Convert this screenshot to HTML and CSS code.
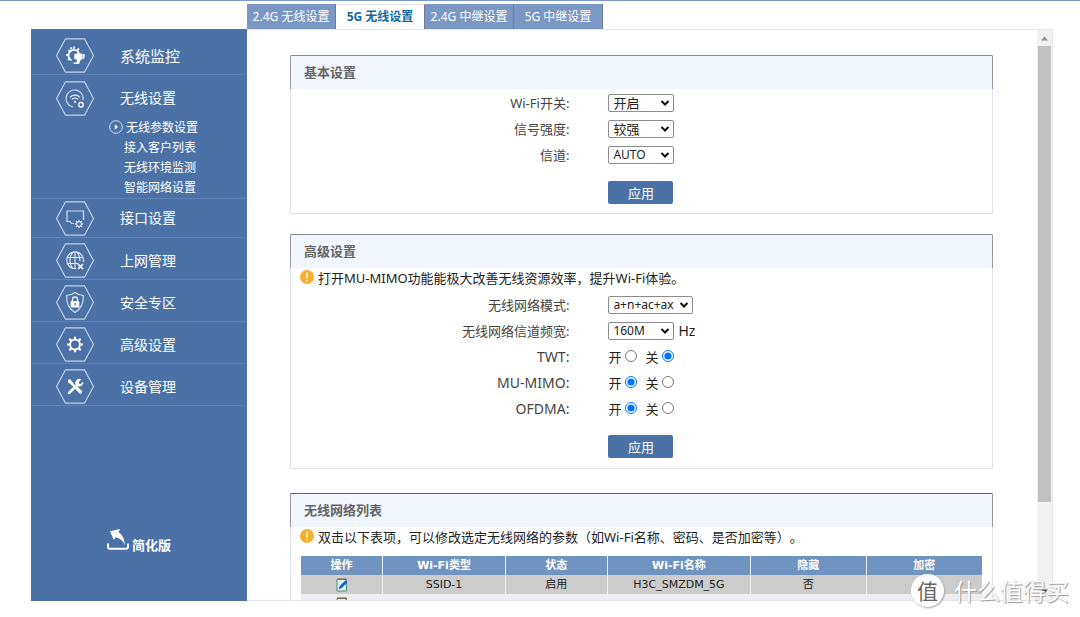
FILE: index.html
```html
<!DOCTYPE html>
<html lang="zh-CN">
<head>
<meta charset="utf-8">
<meta name="viewport" content="width=device-width, initial-scale=1">
<title>5G 无线设置</title>
<link rel="stylesheet" href="styles.css">
</head>
<body>
<svg class="sprite" aria-hidden="true">
  <defs>
    <symbol id="hex" viewBox="0 0 38 35"><path d="M9.5 .8h19l9 16.7-9 16.7h-19L.5 17.500z" fill="none" stroke="#c3d2e8" stroke-width="1.200"/></symbol>
    <symbol id="cog" viewBox="0 0 16 16">
      <circle cx="8" cy="8" r="4.900" fill="none" stroke="#fff" stroke-width="1.900"/>
      <path d="M8 0v3M8 13v3M0 8h3M13 8h3M2.300 2.300l2 2M11.700 11.700l2 2M13.700 2.300l-2 2M4.300 11.700l-2 2" stroke="#fff" stroke-width="2.200" fill="none"/>
    </symbol>
    <symbol id="info" viewBox="0 0 14 14">
      <circle cx="7" cy="7" r="7" fill="#f7ae2c"/>
      <path d="M7 3v5" stroke="#fff3dc" stroke-width="1.600" stroke-linecap="round"/><circle cx="7" cy="10.800" r="1" fill="#fff3dc"/>
    </symbol>
    <symbol id="edit" viewBox="0 0 12 14">
      <path d="M1 1.500h9.500v11.500H1z" fill="#d6f3ee" stroke="#4f8f86" stroke-width="1"/>
      <path d="M1 1.200h9.500" stroke="#8a6a4a" stroke-width="1.600"/>
      <path d="M3 10.800l1-3L9.500 2.300l2 2L6 9.800z" fill="#1a5fd6"/>
      <path d="M3 10.800l.6-1.900 1.300 1.300z" fill="#123"/>
    </symbol>
  </defs>
</svg>

<div class="page">
  <aside class="sidebar">
    <nav class="menu">
      <a class="menu-item menu-item--first" href="#">
        <svg class="menu-icon" viewBox="0 0 38 35"><use href="#hex"/>
          <path d="M15.500 22.500a5.600 5.600 0 1 1 7.500-7.500" fill="none" stroke="#fff" stroke-width="1.800"/>
          <path d="M12.500 12l1.500 1.500M10.200 17h2M12 22l1.600-1.200M18 8.500v2.200M23 10.500l-1.500 1.500M14.800 9.400l.8 1.800" stroke="#fff" stroke-width="1.800"/>
          <path d="M18.500 16l4-1 6.500 1.500-.8 4-3.700 1.500-1.500 4h-5l-1-1.600h3.500l.5-2.400-3-1.500z" fill="#fff"/>
          <path d="M26.500 16.500l-.5 4.500" stroke="#4b72a6" stroke-width=".6"/>
        </svg><span>系统监控</span></a>
      <div class="menu-group">
        <a class="menu-item" href="#">
          <svg class="menu-icon" viewBox="0 0 38 35"><use href="#hex"/>
            <path d="M17 26a8.600 8.600 0 1 1 10-6.500" fill="none" stroke="#d3deee" stroke-width="1.100"/>
            <path d="M14 16.300a7 7 0 0 1 10 0M15.800 18.400a4.500 4.500 0 0 1 6.400 0" fill="none" stroke="#e2eaf5" stroke-width="1.200"/>
            <circle cx="19" cy="20.800" r="1.100" fill="#fff"/>
            <circle cx="25" cy="23.700" r="2.300" fill="none" stroke="#fff" stroke-width="1.400"/>
          </svg><span>无线设置</span></a>
        <ul class="submenu">
          <li class="is-current"><a href="#"><svg class="play" viewBox="0 0 14 14"><circle cx="7" cy="7" r="6.300" fill="none" stroke="#d3deee"/><path d="M5.800 4.200L9 7 5.800 9.800z" fill="#fff"/></svg>无线参数设置</a></li>
          <li><a href="#">接入客户列表</a></li>
          <li><a href="#">无线环境监测</a></li>
          <li><a href="#">智能网络设置</a></li>
        </ul>
      </div>
      <a class="menu-item menu-item--compact" href="#">
        <svg class="menu-icon" viewBox="0 0 38 35"><use href="#hex"/>
          <path d="M18 22.500h-2.500l-1.500-2h-3V10h16.500v9" fill="none" stroke="#d3deee" stroke-width="1.200"/>
          <use href="#cog" x="19" y="19" width="8" height="8"/>
        </svg><span>接口设置</span></a>
      <a class="menu-item" href="#">
        <svg class="menu-icon" viewBox="0 0 38 35"><use href="#hex"/>
          <g fill="none" stroke="#e2eaf5" stroke-width="1.100"><path d="M20 25.600a8.400 8.400 0 1 1 7.300-6.600M10.800 14.500h16.600M10.800 20.500h11.500M19 9v16.500M17 9.300c-4 4.500-4 12 0 16.300M21 9.300c2 2.200 3 5.200 3 8.700"/></g>
          <path d="M22 21l5 5M27 21l-5 5" stroke="#fff" stroke-width="1.700"/>
        </svg><span>上网管理</span></a>
      <a class="menu-item" href="#">
        <svg class="menu-icon" viewBox="0 0 38 35"><use href="#hex"/>
          <path d="M19 7.500c2.500 2 5 2.800 8.300 3 .5 8-1.500 13-8.300 17-6.800-4-8.800-9-8.300-17 3.300-.2 5.800-1 8.300-3z" fill="none" stroke="#d3deee" stroke-width="1.200"/>
          <path d="M14.700 16.200h8.600v6.300h-8.600z" fill="#fff"/><path d="M16.500 16.500v-2.200a2.500 2.500 0 0 1 5 0v2.200" fill="none" stroke="#fff" stroke-width="1.300"/>
          <path d="M19 18v2.500" stroke="#4b72a6" stroke-width="1.200"/>
        </svg><span>安全专区</span></a>
      <a class="menu-item" href="#">
        <svg class="menu-icon" viewBox="0 0 38 35"><use href="#hex"/><use href="#cog" x="11" y="9.500" width="16" height="16"/></svg><span>高级设置</span></a>
      <a class="menu-item" href="#">
        <svg class="menu-icon" viewBox="0 0 38 35"><use href="#hex"/>
          <path d="M12.500 10.500l1.500-.5 5.500 7-1.300 1.300-6.500-5.300z" fill="#fff"/>
          <path d="M20 18.500l4.500 4.500" stroke="#fff" stroke-width="3.400" stroke-linecap="round"/>
          <path d="M13 24l9-9" stroke="#fff" stroke-width="2.500" stroke-linecap="round"/>
          <path d="M25.300 10.500l-2.500 2.500.3 1.700 1.700.3 2.300-2.500a4 4 0 0 1-5.700 4.500l-2-2a4 4 0 0 1 5.900-4.500z" fill="#fff"/>
        </svg><span>设备管理</span></a>
    </nav>
    <a class="simple-link" href="#">
      <svg viewBox="0 0 22 22"><path d="M1 14.500v3.200q0 2 2 2h16q2 0 2-2v-3.200" fill="none" stroke="#fff" stroke-width="1.900"/><path d="M3 2.200L13 0l-1.400 3.300c4 2.500 5.800 6.500 6.200 13-2-5-5-7-9-8L6.800 11z" fill="#fff"/></svg>
      <span>简化版</span></a>
  </aside>

  <main class="main">
    <nav class="tabs">
      <a class="tab" href="#">2.4G 无线设置</a>
      <a class="tab is-active" href="#" aria-current="page">5G 无线设置</a>
      <a class="tab" href="#">2.4G 中继设置</a>
      <a class="tab" href="#">5G 中继设置</a>
    </nav>
    <div class="frame">
      <div class="content">
        <section class="panel">
          <h2>基本设置</h2>
          <form class="form">
            <div class="row"><label for="wifi">Wi-Fi开关:</label><div><select id="wifi"><option>开启</option></select></div></div>
            <div class="row"><label for="power">信号强度:</label><div><select id="power"><option>较强</option></select></div></div>
            <div class="row"><label for="channel">信道:</label><div><select id="channel"><option>AUTO</option></select></div></div>
            <div class="row row--action"><button type="button">应用</button></div>
          </form>
        </section>

        <section class="panel panel--advanced">
          <h2>高级设置</h2>
          <p class="note"><svg viewBox="0 0 14 14"><use href="#info"/></svg>打开MU-MIMO功能能极大改善无线资源效率，提升Wi-Fi体验。</p>
          <form class="form">
            <div class="row"><label for="mode">无线网络模式:</label><div><select id="mode" class="wide"><option>a+n+ac+ax</option></select></div></div>
            <div class="row"><label for="width">无线网络信道频宽:</label><div><select id="width"><option>160M</option></select><span class="unit">Hz</span></div></div>
            <div class="row"><span class="name">TWT:</span><div class="radios"><label>开<input type="radio" name="twt"></label><label>关<input type="radio" name="twt" checked></label></div></div>
            <div class="row"><span class="name">MU-MIMO:</span><div class="radios"><label>开<input type="radio" name="mimo" checked></label><label>关<input type="radio" name="mimo"></label></div></div>
            <div class="row"><span class="name">OFDMA:</span><div class="radios"><label>开<input type="radio" name="ofdma" checked></label><label>关<input type="radio" name="ofdma"></label></div></div>
            <div class="row row--action"><button type="button">应用</button></div>
          </form>
        </section>

        <section class="panel panel--list">
          <h2>无线网络列表</h2>
          <p class="note"><svg viewBox="0 0 14 14"><use href="#info"/></svg>双击以下表项，可以修改选定无线网络的参数（如Wi-Fi名称、密码、是否加密等）。</p>
          <table>
            <colgroup><col class="c-op"><col class="c-type"><col class="c-state"><col class="c-name"><col class="c-flag"><col class="c-flag"></colgroup>
            <thead><tr><th>操作</th><th>Wi-Fi类型</th><th>状态</th><th>Wi-Fi名称</th><th>隐藏</th><th>加密</th></tr></thead>
            <tbody>
              <tr><td><svg viewBox="0 0 12 14"><use href="#edit"/></svg></td><td>SSID-1</td><td>启用</td><td>H3C_SMZDM_5G</td><td>否</td><td></td></tr>
              <tr><td><svg viewBox="0 0 12 14"><use href="#edit"/></svg></td><td></td><td></td><td></td><td></td><td></td></tr>
            </tbody>
          </table>
        </section>
      </div>
      <div class="scrollbar" aria-hidden="true">
        <svg viewBox="0 0 14 16"><path d="M3.500 10.500L7 6.500l3.500 4z" fill="#8f8f8f"/></svg>
        <div class="thumb"></div>
        <svg viewBox="0 0 14 16"><path d="M3.500 5.500L7 9.500l3.500-4z" fill="#505050"/></svg>
      </div>
    </div>
  </main>
</div>
<div class="watermark"><span class="badge">值</span><span>什么值得买</span></div>
</body>
</html>
```
FILE: styles.css
```css
* { box-sizing: border-box; }

body {
  margin: 0;
  background: #fff;
  color: #222;
  font: 13px/20px "Noto Sans", "Noto Sans CJK SC", sans-serif;
  text-spacing-trim: space-all;
}

a { color: inherit; text-decoration: none; }

.sprite { position: absolute; width: 0; height: 0; }

.page {
  display: flex;
  height: 100vh;
  padding: 0 27px 16px 31px;
  border-top: 1px solid #7b98c4;
}

/* Sidebar */
.sidebar {
  display: flex;
  flex: none;
  flex-direction: column;
  width: 216px;
  margin-top: 28px;
  padding-top: 4px;
  background: #4b72a6;
  color: #fff;
}

.menu-item {
  display: flex;
  align-items: center;
  gap: 26px;
  height: 42px;
  padding: 4px 0 0 25px;
  border-bottom: 1px solid #5f83b4;
  font-size: 14px;
}

.menu-item--first { font-size: 15px; }
.menu-item--compact { height: 39px; padding-top: 0; }
.menu-icon { width: 38px; height: 35px; }

.menu-group { border-bottom: 1px solid #5f83b4; }
.menu-group .menu-item { border-bottom: 0; }

.submenu {
  margin: 0;
  padding: 1px 0 0 93px;
  list-style: none;
  font-size: 12px;
}

.submenu .is-current { margin-left: -15px; }
.submenu a { display: flex; align-items: center; gap: 3px; }
.play { width: 14px; height: 14px; margin-bottom: 3px; }

.simple-link {
  display: flex;
  align-items: flex-end;
  gap: 3px;
  margin: auto 0 46px 76px;
  font-weight: bold;
}

.simple-link svg { width: 22px; height: 22px; margin-bottom: 4px; }

/* Tabs */
.main {
  display: flex;
  flex: 1;
  flex-direction: column;
  min-width: 0;
}

.tabs {
  display: flex;
  height: 28px;
  padding-top: 3px;
  font-size: 12px;
}

.tab {
  width: 89px;
  border-right: 1px solid #6d7c97;
  background: #7b98c4;
  color: #fff;
  line-height: 25px;
  text-align: center;
}

.tab.is-active {
  border-top: 1px solid #dfe3ee;
  background: #fff;
  color: #17699c;
  font-weight: bold;
  line-height: 23px;
}

/* Scrolling frame */
.frame {
  display: flex;
  flex: 1;
  min-height: 0;
  border: 1px solid #e4e4ee;
  border-left: 0;
}

.content {
  flex: 1;
  overflow: hidden;
  padding: 25px 44px 0 43px;
}

.scrollbar {
  display: flex;
  flex-direction: column;
  justify-content: space-between;
  width: 15px;
  background: #f1f1f1;
}

.scrollbar svg { flex: none; height: 16px; }

.thumb {
  flex: 0 0 80%;
  margin: 0 1px auto;
  background: #c1c1c1;
}

/* Panels */
.panel {
  min-height: 159px;
  margin-bottom: 20px;
  border: 1px solid #dfe2f0;
  border-top-color: #8a8c92;
}

.panel--advanced { min-height: 235px; margin-bottom: 24px; }

.panel h2 {
  margin: 0 -1px;
  padding-left: 13px;
  border: solid #98999f;
  border-width: 0 1px;
  background: #f2f6ff;
  color: #666;
  font-size: 13px;
  line-height: 33px;
}

.panel--list { border-top-color: #666; }

.note {
  display: flex;
  align-items: center;
  gap: 4px;
  height: 20px;
  margin: 0 0 4px;
  padding-left: 9px;
}

.note svg { flex: none; width: 14px; height: 14px; margin-bottom: 3px; }

.form { padding-top: 1px; }
.panel--advanced .form { padding-top: 0; }

.row {
  display: grid;
  grid-template-columns: 40% 1fr;
  column-gap: 37px;
  align-items: center;
  height: 26px;
}

.row > label, .row > .name {
  padding-right: 2px;
  color: #444;
  text-align: right;
}

.row > .name { font-size: 14px; }
.row > div { display: flex; align-items: center; }

select {
  width: 66px;
  height: 18px;
  padding: 0 16px 0 4px;
  border: 1px solid #8c8c8c;
  border-radius: 2px;
  appearance: none;
  background: #fff url("data:image/svg+xml,%3Csvg xmlns='http://www.w3.org/2000/svg' viewBox='0 0 10 8'%3E%3Cpath d='M1.500 2l3.500 3.500L8.500 2' fill='none' stroke='%23111' stroke-width='2'/%3E%3C/svg%3E") no-repeat right 3px center / 10px 8px;
  color: #222;
  font: 12px/16px "Noto Sans", "Noto Sans CJK SC", sans-serif;
}

#wifi, #power { font-size: 13px; }
select.wide { width: 85px; }
.unit { margin-left: 4px; font-size: 14px; }

.radios { gap: 8px; }
.radios label { display: flex; align-items: center; gap: 4px; }
.radios input { width: 12px; height: 12px; margin: 0 0 3px; }

.row--action { height: 22px; margin-top: 13px; }

button {
  grid-column: 2;
  width: 65px;
  height: 23px;
  padding: 0;
  border: 0;
  border-radius: 2px;
  background: #4b72a6;
  color: #fff;
  font: 13px "Noto Sans CJK SC", sans-serif;
}

/* Network table */
table {
  width: calc(100% - 20px);
  margin: 9px 10px 0;
  border-collapse: collapse;
  table-layout: fixed;
  font: 11px/19px "DejaVu Sans", "Noto Sans CJK SC", sans-serif;
  text-align: center;
}

.c-op { width: 12%; }
.c-type { width: 18%; }
.c-state { width: 15%; }
.c-name { width: 21%; }
.c-flag { width: 17%; }

th, td { height: 19px; padding: 0; }
th + th, td + td { border-left: 1px solid #f0f0f0; }
th { background: #7094c1; color: #fff; }
td { background: #ccc; }
tr + tr td { background: #eee; }
td svg { display: block; width: 12px; height: 14px; margin: 0 auto; }

/* Watermark */
.watermark {
  position: absolute;
  right: 11px;
  bottom: 10px;
  display: flex;
  align-items: center;
  gap: 10px;
  color: #fff;
  font: 23px/34px "Noto Sans CJK SC", sans-serif;
  text-shadow: 1px 1px 1px #999, 0 0 1px #bbb;
}

.badge {
  width: 33px;
  height: 33px;
  border-radius: 50%;
  background: #fff;
  box-shadow: 1px 1px 2px #aaa;
  color: #666;
  font-size: 21px;
  line-height: 33px;
  text-align: center;
  text-shadow: none;
}
```
